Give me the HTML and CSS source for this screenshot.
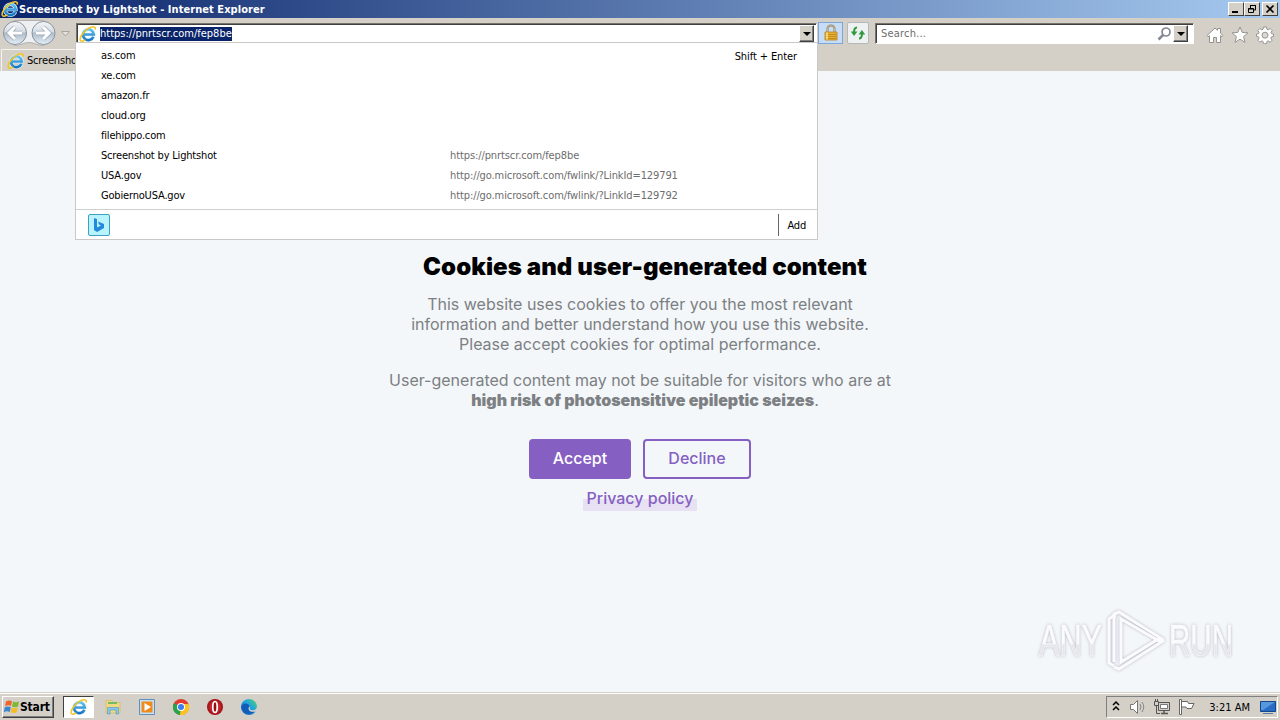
FILE: index.html
```
<!DOCTYPE html>
<html lang="en">
  <head>
    <meta charset="UTF-8" />
    <meta name="viewport" content="width=device-width, initial-scale=1.0" />
    <title>Screenshot by Lightshot</title>
    <link rel="stylesheet" href="styles.css">
  </head>
  <body>
    <svg width="0" height="0" class="defs">
      <defs>
        <linearGradient id="ieblue" x1="0" y1="0" x2="0" y2="1">
          <stop offset="0" stop-color="#62c4f0" />
          <stop offset="1" stop-color="#1676c4" />
        </linearGradient>
        <linearGradient id="edge" x1="0" y1="1" x2="1" y2="0">
          <stop offset="0" stop-color="#0c59b5" />
          <stop offset="0.55" stop-color="#20a3df" />
          <stop offset="1" stop-color="#57d36a" />
        </linearGradient>
        <radialGradient id="opera">
          <stop offset="0" stop-color="#f05050" />
          <stop offset="1" stop-color="#9c0b12" />
        </radialGradient>
        <linearGradient id="nav" x1="0" y1="0" x2="0" y2="1">
          <stop offset="0" stop-color="#f4f6f9" />
          <stop offset="0.45" stop-color="#d4dce5" />
          <stop offset="0.5" stop-color="#aebbc9" />
          <stop offset="1" stop-color="#e4f1fa" />
        </linearGradient>
        <linearGradient id="any" x1="0" y1="0" x2="0" y2="1">
          <stop offset="0.55" stop-color="#fbfafd" />
          <stop offset="0.6" stop-color="#e6e5ec" />
        </linearGradient>
        <symbol id="ie" viewBox="0 0 18 18">
          <path d="M14.4 11.8A5.4 5.4 0 1 1 14.8 9.5H5" fill="none" stroke="#e4f5fd" stroke-width="3.7" />
          <path d="M14.4 11.8A5.4 5.4 0 1 1 14.8 9.5H5" fill="none" stroke="url(#ieblue)" stroke-width="2.6" />
          <path d="M16.2 4.6C17 1 13.3.9 9.3 3.4 4.5 6.4.6 12 1.2 15c.5 2 3 1.200 5.200-.2" fill="none" stroke="#f4c529" stroke-width="1.600" />
        </symbol>
      </defs>
    </svg>

    <div class="titlebar">
      <svg class="logo" width="18" height="18"><use href="#ie" /></svg>
      <span class="title">Screenshot by Lightshot - Internet Explorer</span>
      <div class="winbtns">
        <span class="winbtn"><svg width="14" height="12"><path d="M3 9h6" stroke="#000" stroke-width="2" /></svg></span>
        <span class="winbtn"><svg width="14" height="12"><path d="M5.500 5V2.500h5v4.500H9M5 2.500h6M3.500 5.500h5v4h-5zM3 6h6" fill="none" stroke="#000" /></svg></span>
        <span class="winbtn close"><svg width="14" height="12"><path d="M3.500 2.500l7 7M10.500 2.500l-7 7" stroke="#000" stroke-width="1.7" /></svg></span>
      </div>
    </div>

    <div class="toolbar">
      <svg class="nav" width="76" height="30">
        <path d="M15 2.500h28a13 13 0 0 1 0 25c-6 0-8-3-14-3s-8 3-14 3a13 13 0 0 1 0-25z" fill="#eef0f2" stroke="#b3b1ad" />
        <circle cx="15" cy="15" r="11.500" fill="url(#nav)" stroke="#8b939d" />
        <circle cx="43.500" cy="15" r="11.500" fill="url(#nav)" stroke="#8b939d" />
        <path d="M22 15H10M15 9l-6 6 6 6" fill="none" stroke="#9aa7b5" stroke-width="4.500" />
        <path d="M36 15h12M43 9l6 6-6 6" fill="none" stroke="#9aa7b5" stroke-width="4.500" />
        <path d="M22 15H10M15 9l-6 6 6 6" fill="none" stroke="#fff" stroke-width="3" />
        <path d="M36 15h12M43 9l6 6-6 6" fill="none" stroke="#fff" stroke-width="3" />
        <path d="M61.500 13.500h8l-4 4.500z" fill="#e6e3dd" stroke="#a9a69f" />
      </svg>
      <div class="field address">
        <svg width="18" height="18"><use href="#ie" /></svg>
        <span class="url">https://pnrtscr.com/fep8be</span>
        <span class="drop"></span>
      </div>
      <span class="tool lock">
        <svg width="16" height="18">
          <path d="M4.500 9V5a3.500 3.500 0 0 1 7 0v4" fill="none" stroke="#8d7d5b" stroke-width="2" />
          <path d="M4.500 9V5a3.500 3.500 0 0 1 7 0v4" fill="none" stroke="#ddd3b8" stroke-width=".7" />
          <path d="M2 8h12v8H2z" fill="#eab02f" stroke="#b5831d" stroke-width=".8" />
          <path d="M2.500 10.500h11M2.500 12.500h11M2.500 14.500h11" stroke="#c38a1c" />
          <path d="M4 8.500v7" stroke="#ffe392" stroke-width="1.500" />
        </svg>
      </span>
      <span class="tool refresh">
        <svg width="16" height="16">
          <path d="M7 2.500C4.500 2.500 4 4 4 7.500M9 13.500c2.500 0 3-1.500 3-5" fill="none" stroke="#2f9a3c" stroke-width="2" />
          <path d="M.8 6.500h6.600L4.100 11zM8.600 9.500h6.600L11.900 5z" fill="#2f9a3c" />
        </svg>
      </span>
      <div class="field search">
        <span class="placeholder">Search...</span>
        <svg width="15" height="16"><circle cx="9" cy="6" r="4" fill="none" stroke="#848890" stroke-width="1.700" /><path d="M6 9l-4.500 4.500" stroke="#848890" stroke-width="2.500" /></svg>
        <span class="drop"></span>
      </div>
      <div class="commands">
        <svg width="18" height="18"><path d="M1 9.500l8-7.500 2.500 2.300V2.500h3v4.700L17 9.500l-1 1.200-1.500-1V16.500h-4v-5h-3v5h-4V9.700L2 10.700z" fill="#fff" stroke="#96948f" /></svg>
        <svg width="18" height="18"><path d="M9 1l2.200 5.400 5.800.4-4.400 3.800 1.400 5.800L9 13.200l-5 3.200 1.400-5.800L1 6.800l5.800-.4z" fill="#fff" stroke="#96948f" /></svg>
        <svg width="18" height="18"><path d="M7.500 1h3l.5 2.300 1.200.5 2-1.300 2 2-1.300 2 .6 1.200 2 .4v2.300l-2.100.5-.6 1.300 1.300 2-2 2-2-1.300-1.100.5-.5 2.300h-3L7 15.400l-1.200-.5-2 1.300-2-2 1.300-2-.5-1.300L.5 10.400V8.100l2.100-.4.5-1.200-1.300-2 2-2 2 1.300L7 3.300z" fill="#fff" stroke="#96948f" /><circle cx="9" cy="9.200" r="3" fill="#ddd9d2" stroke="#96948f" /></svg>
      </div>
    </div>

    <div class="tabs">
      <div class="tab">
        <svg width="18" height="18"><use href="#ie" /></svg>
        <span>Screenshot</span>
      </div>
    </div>

    <div class="suggest">
      <ul>
        <li><span class="name">as.com</span><span class="keys">Shift + Enter</span></li>
        <li><span class="name">xe.com</span></li>
        <li><span class="name">amazon.fr</span></li>
        <li><span class="name">cloud.org</span></li>
        <li><span class="name">filehippo.com</span></li>
        <li><span class="name">Screenshot by Lightshot</span><span class="link">https://pnrtscr.com/fep8be</span></li>
        <li><span class="name">USA.gov</span><span class="link">http://go.microsoft.com/fwlink/?LinkId=129791</span></li>
        <li><span class="name">GobiernoUSA.gov</span><span class="link">http://go.microsoft.com/fwlink/?LinkId=129792</span></li>
      </ul>
      <div class="providers">
        <span class="bing"><svg width="20" height="20"><path d="M5 3l3 1v8.500l4-2-2-1-1-3 6 2.500v4L8 17l-3-2z" fill="#2488dc" /></svg></span>
        <span class="add">Add</span>
      </div>
    </div>

    <div class="page">
      <h1>Cookies and user-generated content</h1>
      <p>This website uses cookies to offer you the most relevant<br />information and better understand how you use this website.<br />Please accept cookies for optimal performance.</p>
      <p class="ugc">User-generated content may not be suitable for visitors who are at<br /><span class="risk"><b>high risk of photosensitive epileptic seizes</b>.</span></p>
      <div class="buttons">
        <button class="accept">Accept</button>
        <button class="decline">Decline</button>
      </div>
      <a class="policy">Privacy policy</a>
      <svg class="watermark" width="220" height="74">
        <g class="mark">
          <text x="9" y="51" textLength="63" lengthAdjust="spacingAndGlyphs">ANY</text>
          <path d="M86 11h-3l-4 3v44l5 3M84 57V9l5-2 43 27-3 2-38-22v43l39-24 3 3-44 28-5-2" fill="none" stroke="#fbfafd" stroke-width="3" />
          <text x="139" y="51" textLength="64" lengthAdjust="spacingAndGlyphs">RUN</text>
        </g>
      </svg>
    </div>

    <div class="taskbar">
      <div class="start">
        <svg width="18" height="18">
          <path d="M3 3.500q3-2 6-.3L8 8q-3-1.500-6 .3z" fill="#ef6530" />
          <path d="M10 3.500q3 1.500 6 0L15 8.500q-3 1.300-6 0z" fill="#7fb832" />
          <path d="M1.800 9.300q3-1.700 6 0l-1 4.700q-3-1.500-6 .3z" fill="#3c86cf" />
          <path d="M8.800 9.500q3 1.500 6 0l-1 4.800q-3 1.500-6 0z" fill="#f5bd25" />
        </svg>
        <span>Start</span>
      </div>
      <div class="task"><svg width="18" height="18"><use href="#ie" /></svg></div>
      <div class="quick">
        <svg width="18" height="18"><path d="M2 2.500h6l1 2h7V15H2z" fill="#f1d984" stroke="#d5b75b" stroke-width=".7" /><path d="M4 5h9" stroke="#70bd64" stroke-width="2" /><path d="M3.500 16V9.500h11V16h-2.500v-4H6v4z" fill="#85c8ea" stroke="#599fc4" stroke-width=".7" /></svg>
        <svg width="18" height="18"><path d="M1.500 1.500h15v15h-15z" fill="#c5e1f5" stroke="#628fbe" /><path d="M3.500 3.500h11v11h-11z" fill="#f18a1b" /><path d="M6.500 5l6.500 4-6.500 4z" fill="#fff" /></svg>
        <svg width="18" height="18"><circle cx="9" cy="9" r="8" fill="#e33b2e" /><path d="M9 9L2 5A8 8 0 0 0 8 17l4-6z" fill="#2ba24c" /><path d="M9 9l-1 8A8 8 0 0 0 16.500 6H9z" fill="#fbc521" /><circle cx="9" cy="9" r="4" fill="#fff" /><circle cx="9" cy="9" r="3" fill="#3b7ded" /></svg>
        <svg width="18" height="18"><circle cx="9" cy="9" r="8" fill="url(#opera)" /><ellipse cx="9" cy="9" rx="2.200" ry="5.500" fill="#9c0b12" stroke="#fff" stroke-width="1.700" /></svg>
        <svg width="18" height="18"><circle cx="9" cy="9" r="8" fill="url(#edge)" /><path d="M1.200 9C3 4 9 5 9.500 8.500c-3 2-.5 6 5.500 4.800A8 8 0 0 1 1.200 9z" fill="#135cb9" /><path d="M9.700 8.500c1 1.500-.5 2 .6 3 1.800 1.500 6 .8 6.700-2.500v4c-3 1.500-7 1-8-1-.7-1.500 0-2.700.7-3.500z" fill="#d4d0c8" /></svg>
      </div>
      <div class="tray">
        <svg width="16" height="20"><path d="M6 8l3-3 3 3M6 13l3-3 3 3" fill="none" stroke="#000" stroke-width="1.500" /></svg>
        <svg width="18" height="18"><path d="M1.500 6.500h3l4-4v13l-4-4h-3z" fill="#fff" stroke="#777" /><path d="M11 6q2 3 0 6M13 4q3.500 5 0 10" fill="none" stroke="#888" /></svg>
        <svg width="18" height="18"><path d="M5.500 4.500h11v8h-11z" fill="#d4d0c8" stroke="#555" /><path d="M7.500 6.500h7v4h-7z" fill="#fff" stroke="#777" /><path d="M8 15.500h7M11 13v2" stroke="#555" stroke-width="1.500" /><path d="M1.500 3.500h4v4h-4zM2.500 1v3M4.500 1v3M3.500 8v7.500H7" fill="none" stroke="#555" /></svg>
        <svg width="18" height="18"><path d="M2.500 1.500h2v15h-2z" fill="#fff" stroke="#666" /><path d="M4.500 3.500h6l1 2h5.500l-2.500 5H10l-1-1.500H4.500z" fill="#fff" stroke="#666" /></svg>
        <span class="clock">3:21 AM</span>
        <svg width="18" height="18"><path d="M1.500 3.500h15v10h-15z" fill="#286cc4" stroke="#15458c" /><path d="M2 4h14L4 12H2z" fill="#5698de" /><path d="M4 15.500h10" stroke="#587fa8" /></svg>
      </div>
    </div>
  </body>
</html>
```
FILE: styles.css
```
body {
  display: flex;
  flex-direction: column;
  width: 1280px;
  height: 720px;
  margin: 0;
  overflow: hidden;
  position: relative;
  background: #d4d0c8;
  color: #000;
  font: 11px/14px "DejaVu Sans Condensed", "DejaVu Sans", sans-serif;
  font-stretch: condensed;
  letter-spacing: -0.18px;
  white-space: nowrap;
}
svg {
  display: block;
  flex: none;
}
.defs {
  position: absolute;
}
.titlebar {
  display: flex;
  align-items: center;
  height: 18px;
  background: linear-gradient(90deg, #0a246a, #a6caf0);
  color: #fff;
  font-weight: bold;
}
.logo {
  margin-left: 1px;
}
.title {
  padding-top: 1px;
  letter-spacing: 0.06px;
}
.winbtns {
  display: flex;
  margin-left: auto;
  padding-right: 2px;
}
.winbtn {
  width: 14px;
  height: 12px;
  border: 1px solid;
  border-color: #fff #404040 #404040 #fff;
  background: #d4d0c8;
}
.close {
  margin-left: 2px;
}
.toolbar {
  display: flex;
  align-items: flex-start;
  height: 31px;
}
.field {
  display: flex;
  align-items: center;
  box-sizing: border-box;
  height: 21px;
  margin-top: 5px;
  border: 1px solid;
  border-color: #77736b #fff #fff #77736b;
  box-shadow: inset 1px 1px #404040;
  background: #fff;
}
.address {
  width: 741px;
  padding: 0 2px;
}
.url {
  height: 14px;
  margin-left: 3px;
  background: #0a246a;
  color: #fff;
  letter-spacing: 0;
}
.drop {
  display: flex;
  align-items: center;
  justify-content: center;
  box-sizing: border-box;
  width: 15px;
  height: 17px;
  margin-left: auto;
  border: 1px solid;
  border-color: #fff #404040 #404040 #fff;
  box-shadow: inset -1px -1px #808080;
  background: #d4d0c8;
}
.drop::after {
  content: "";
  border: 4px solid transparent;
  border-top-color: #000;
  border-bottom: 0;
}
.tool {
  display: flex;
  align-items: center;
  justify-content: center;
  box-sizing: border-box;
  height: 22px;
  margin-top: 4px;
}
.lock {
  width: 25px;
  margin-left: 1px;
  border: 1px solid #7da7dc;
  background: #c7ddf6;
}
.refresh {
  width: 22px;
  margin-left: 4px;
  border: 1px solid #b5b8b9;
  border-radius: 2px;
  background: #edf1f2;
}
.search {
  width: 319px;
  margin-left: 6px;
  padding: 0 5px 0 5px;
}
.placeholder {
  padding-top: 1px;
  color: #6d6d6d;
  letter-spacing: 0.2px;
}
.search svg {
  margin-left: auto;
}
.search .drop {
  margin-left: 1px;
}
.commands {
  display: flex;
  gap: 7px;
  margin: 8px 0 0 12px;
}
.tabs {
  display: flex;
  height: 22px;
}
.tab {
  display: flex;
  align-items: center;
  box-sizing: border-box;
  width: 74px;
  margin-left: 1px;
  padding-left: 5px;
  overflow: hidden;
  border-top: 1px solid #f5f3ef;
  border-left: 1px solid #f5f3ef;
}
.tab span {
  margin-left: 2px;
}
/* address bar drop-down, lies over the page */
.suggest {
  position: absolute;
  top: 42px;
  left: 75px;
  z-index: 1;
  box-sizing: border-box;
  width: 743px;
  height: 198px;
  border: 1px solid #cbc9c5;
  background: #fff;
}
.suggest ul {
  height: 163px;
  margin: 0;
  padding: 3px 0 0;
  border-bottom: 1px solid #cfcfcf;
  list-style: none;
}
.suggest li {
  display: flex;
  align-items: center;
  height: 20px;
  padding: 0 20px 0 25px;
}
.name {
  width: 349px;
}
.link {
  color: #6d6d6d;
  letter-spacing: -0.1px;
}
.keys {
  margin: 1px 0 0 auto;
  letter-spacing: -0.1px;
}
.providers {
  display: flex;
  align-items: center;
  height: 29px;
  padding: 0 11px 0 12px;
}
.bing {
  width: 20px;
  height: 20px;
  border: 1px solid #3b9fc7;
  border-radius: 2px;
  background: #b9f3fd;
}
.add {
  height: 22px;
  margin-left: auto;
  padding-left: 8px;
  border-left: 1px solid #666;
  line-height: 23px;
}
.page {
  display: flex;
  flex-direction: column;
  align-items: center;
  position: relative;
  height: 621px;
  background: #f3f7fa;
  color: #7d8083;
  font: 400 16px/20px Inter, sans-serif;
  letter-spacing: 0;
  text-align: center;
}
h1 {
  margin: 181px 0 12px;
  padding-left: 10px;
  color: #000;
  font-size: 24px;
  font-weight: 900;
  line-height: 30px;
  letter-spacing: 0.08px;
}
p {
  margin: 0 0 16px;
}
.ugc {
  margin-bottom: 29px;
}
.risk {
  padding-left: 10px;
}
.risk b {
  font-weight: 900;
}
.buttons {
  display: flex;
  gap: 12px;
}
button {
  box-sizing: border-box;
  height: 40px;
  padding: 0 0 2px;
  border: 2px solid #855fc2;
  border-radius: 4px;
  background: none;
  color: #855fc2;
  font: 500 16px/20px Inter, sans-serif;
}
.accept {
  width: 102px;
  background: #855fc2;
  color: #fff;
}
.decline {
  width: 108px;
}
.policy {
  margin-top: 8px;
  padding: 1px 3px 3px;
  background: linear-gradient(transparent 50%, #e7e1f3 50%);
  color: #855fc2;
  font-weight: 500;
}
.watermark {
  position: absolute;
  right: 30px;
  bottom: 13px;
}
.mark {
  fill: url(#any);
  font: 400 44px "Liberation Sans", sans-serif;
  stroke: #fbfafd;
  stroke-width: 0.6px;
  filter: drop-shadow(0 0 1.5px #b5b5c2);
}
.taskbar {
  display: flex;
  align-items: center;
  box-sizing: border-box;
  height: 28px;
  padding-top: 2px;
  box-shadow: inset 0 1px #d4d0c8, inset 0 2px #fff;
}
.start {
  display: flex;
  align-items: center;
  box-sizing: border-box;
  width: 52px;
  height: 22px;
  margin-left: 2px;
  border: 1px solid;
  border-color: #fff #404040 #404040 #fff;
  box-shadow: inset -1px -1px #808080;
  font-size: 12px;
  font-weight: bold;
}
.start span {
  margin-left: -1px;
}
.task {
  display: flex;
  align-items: center;
  justify-content: center;
  box-sizing: border-box;
  width: 31px;
  height: 22px;
  margin-left: 9px;
  border: 1px solid;
  border-color: #404040 #fff #fff #404040;
  background: #fff;
}
.quick {
  display: flex;
  gap: 16px;
  margin-left: 10px;
}
.tray {
  display: flex;
  align-items: center;
  box-sizing: border-box;
  width: 172px;
  height: 22px;
  margin: 0 2px 0 auto;
  border: 1px solid;
  border-color: #808080 #fff #fff #808080;
}
.tray svg + svg {
  margin-left: 6px;
}
.clock {
  margin: 1px 9px 0 auto;
  letter-spacing: 0;
}
```
